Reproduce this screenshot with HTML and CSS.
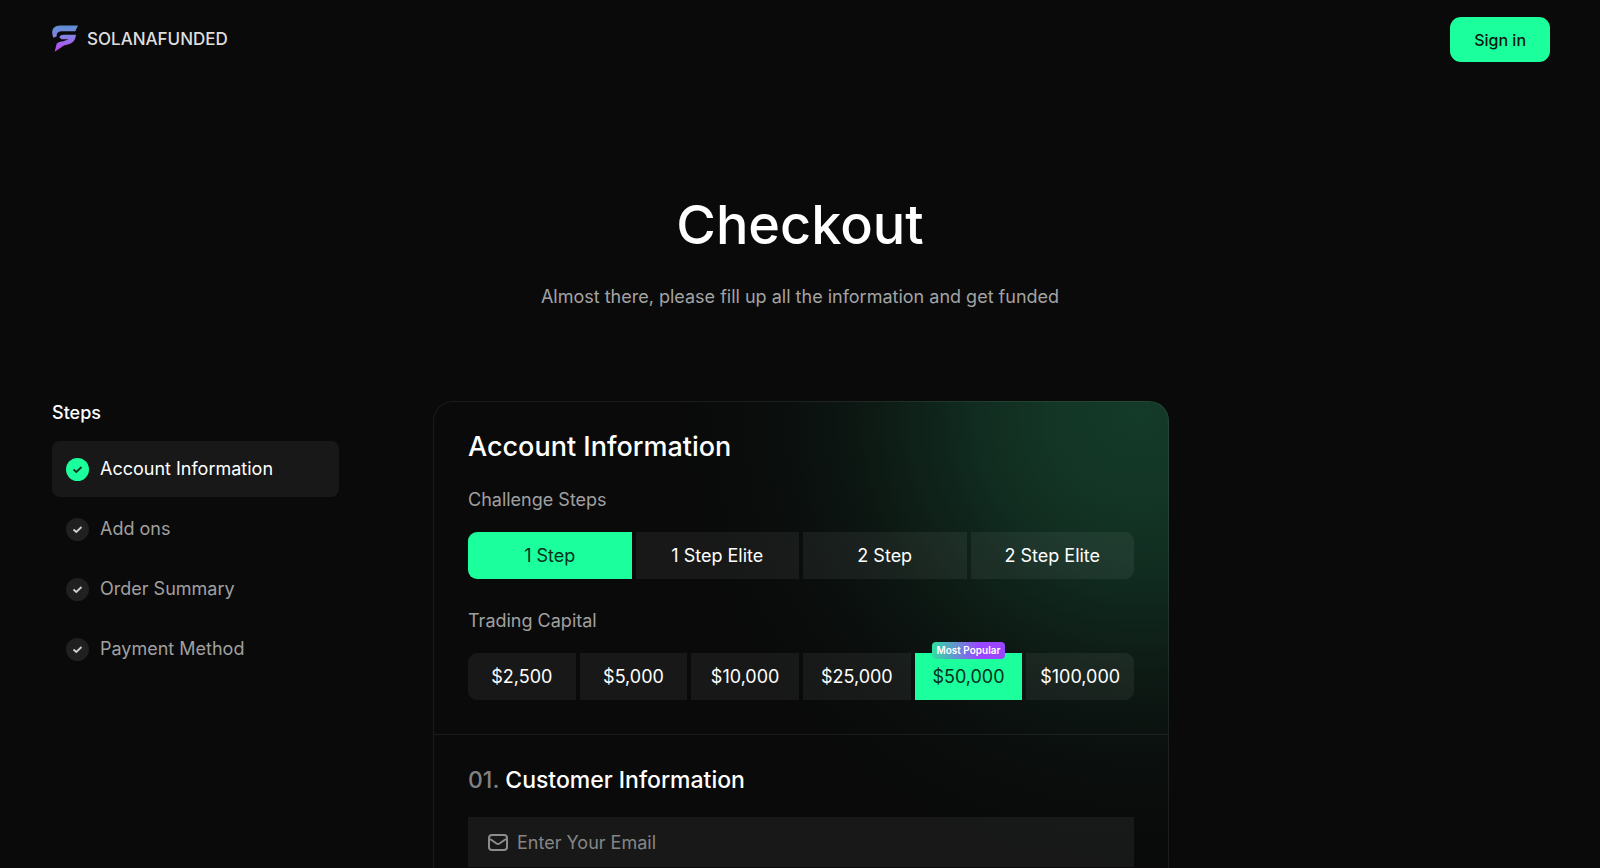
FILE: index.html
```html
<!DOCTYPE html>
<html lang="en">
<head>
    <meta charset="UTF-8">
    <meta name="viewport" content="width=device-width, initial-scale=1.0">
    <title>Checkout - SolanaFunded</title>
    <link rel="stylesheet" href="styles.css">
</head>
<body>
    <header class="header">
        <a href="#" class="logo">
            <svg class="logo-icon" viewBox="0 0 78 80" aria-hidden="true">
                <defs>
                    <linearGradient id="logoGradient" x1="0" y1="0" x2="0" y2="80" gradientUnits="userSpaceOnUse">
                        <stop offset="0" stop-color="#5b8fd0"/>
                        <stop offset="0.4" stop-color="#8484e0"/>
                        <stop offset="0.75" stop-color="#a75cf0"/>
                        <stop offset="1" stop-color="#c640f5"/>
                    </linearGradient>
                </defs>
                <path fill="url(#logoGradient)" d="M4 38C-4 18 2 1 24 1H78L70 18H30C18 18 13 24 14 34Z"/>
                <path fill="url(#logoGradient)" d="M22 36C25 31 28 29 34 29H72C70 46 62 54 50 57L36 61L8 80L14 56C18 50 26 49 34 48L50 42H28Z"/>
            </svg>
            <span class="logo-text">SOLANAFUNDED</span>
        </a>
        <button type="button" class="sign-in">Sign in</button>
    </header>

    <section class="hero">
        <h1>Checkout</h1>
        <p>Almost there, please fill up all the information and get funded</p>
    </section>

    <main class="checkout">
        <!-- Steps -->
        <aside class="steps">
            <h2>Steps</h2>
            <nav class="steps-list">
                <a href="#account" class="step active">
                    <svg class="step-check" viewBox="0 0 23 23" aria-hidden="true"><circle cx="11.500" cy="11.500" r="11.500"/><path d="M7.500 11.500L10.300 14L15.500 9"/></svg>
                    Account Information
                </a>
                <a href="#addons" class="step">
                    <svg class="step-check" viewBox="0 0 23 23" aria-hidden="true"><circle cx="11.500" cy="11.500" r="11.500"/><path d="M7.500 11.500L10.300 14L15.500 9"/></svg>
                    Add ons
                </a>
                <a href="#summary" class="step">
                    <svg class="step-check" viewBox="0 0 23 23" aria-hidden="true"><circle cx="11.500" cy="11.500" r="11.500"/><path d="M7.500 11.500L10.300 14L15.500 9"/></svg>
                    Order Summary
                </a>
                <a href="#payment" class="step">
                    <svg class="step-check" viewBox="0 0 23 23" aria-hidden="true"><circle cx="11.500" cy="11.500" r="11.500"/><path d="M7.500 11.500L10.300 14L15.500 9"/></svg>
                    Payment Method
                </a>
            </nav>
        </aside>

        <!-- Form -->
        <form class="card">
            <section class="card-section" id="account">
                <h2>Account Information</h2>
                <div class="option-group">
                    <h3 id="challengeLabel">Challenge Steps</h3>
                    <div class="options" role="group" aria-labelledby="challengeLabel">
                        <button type="button" class="option selected">1 Step</button>
                        <button type="button" class="option">1 Step Elite</button>
                        <button type="button" class="option">2 Step</button>
                        <button type="button" class="option">2 Step Elite</button>
                    </div>
                </div>
                <div class="option-group">
                    <h3 id="capitalLabel">Trading Capital</h3>
                    <div class="options" role="group" aria-labelledby="capitalLabel">
                        <button type="button" class="option">$2,500</button>
                        <button type="button" class="option">$5,000</button>
                        <button type="button" class="option">$10,000</button>
                        <button type="button" class="option">$25,000</button>
                        <button type="button" class="option selected"><span class="badge">Most Popular</span>$50,000</button>
                        <button type="button" class="option">$100,000</button>
                    </div>
                </div>
            </section>
            <section class="card-section customer">
                <h2><span>01.</span> Customer Information</h2>
                <label class="field">
                    <svg class="field-icon" viewBox="0 0 20 17" aria-hidden="true"><rect x="1" y="1" width="18" height="15" rx="3"/><path d="M2 5L8.500 9.500Q10 10.400 11.500 9.500L18 5"/></svg>
                    <input type="email" placeholder="Enter Your Email" aria-label="Enter Your Email">
                </label>
            </section>
        </form>
    </main>
</body>
</html>
```

FILE: styles.css
```css
* {
    margin: 0;
    padding: 0;
    box-sizing: border-box;
    font-family: 'Inter', sans-serif;
}

body {
    height: 100vh;
    display: flex;
    flex-direction: column;
    overflow: hidden;
    background: #0a0a0a;
    color: #fff;
    font-size: 18px;
    line-height: 24px;
}

a {
    color: inherit;
    text-decoration: none;
}

button {
    border: none;
    cursor: pointer;
}

/* Header */
.header {
    display: flex;
    justify-content: space-between;
    align-items: center;
    padding: 17px 50px 0 52px;
}

.logo {
    display: flex;
    align-items: center;
    gap: 9px;
    padding-bottom: 2px;
}

.logo-icon {
    width: 26px;
    height: 27px;
}

.logo-text {
    color: #dedede;
    font-size: 17px;
    font-weight: 500;
}

.sign-in {
    padding: 0 24px;
    height: 45px;
    border-radius: 11px;
    background: #1bff9c;
    color: #06180f;
    font-size: 16px;
    font-weight: 500;
}

/* Hero */
.hero {
    padding: 127px 24px 0;
    text-align: center;
}

.hero h1 {
    font-size: 54px;
    font-weight: 500;
    line-height: 72px;
}

.hero p {
    margin-top: 24px;
    color: #a3a3a3;
}

/* Checkout */
.checkout {
    flex: none;
    display: grid;
    grid-template-columns: 287px 1fr 287px;
    gap: 94px;
    margin-top: 92px;
    padding: 0 50px 0 52px;
}

.steps h2 {
    font-size: 18px;
    font-weight: 500;
}

.steps-list {
    display: flex;
    flex-direction: column;
    gap: 4px;
    margin-top: 16px;
}

.step {
    display: flex;
    align-items: center;
    gap: 11px;
    height: 56px;
    padding: 0 14px;
    border-radius: 8px;
    color: #a0a0a0;
}

.step.active {
    background: #181818;
    color: #fff;
}

.step-check {
    width: 23px;
    height: 23px;
    fill: none;
    stroke: #d0d0d0;
    stroke-width: 1.8;
}

.step-check circle {
    fill: #202020;
    stroke: none;
}

.step.active .step-check {
    stroke: #0a3320;
}

.step.active .step-check circle {
    fill: #1bff9c;
}

.card {
    border: 1px solid rgba(255, 255, 255, 0.07);
    border-bottom: none;
    border-radius: 20px 20px 0 0;
    background: radial-gradient(circle 470px at calc(100% - 30px) 10px,
        rgba(60, 250, 165, 0.2) 0%,
        rgba(60, 250, 165, 0.18) 20%,
        rgba(60, 250, 165, 0.14) 35%,
        rgba(60, 250, 165, 0.09) 50%,
        rgba(60, 250, 165, 0.05) 62%,
        rgba(60, 250, 165, 0.02) 78%,
        rgba(60, 250, 165, 0) 100%) border-box no-repeat;
}

.card-section {
    padding: 28px 34px 34px;
}

.card-section h2 {
    font-size: 27px;
    font-weight: 500;
    line-height: 34px;
}

.option-group {
    margin-top: 24px;
}

.option-group + .option-group {
    margin-top: 30px;
}

.option-group h3 {
    margin-bottom: 20px;
    color: #a0a0a0;
    font-size: 18px;
    font-weight: 400;
}

.options {
    display: grid;
    grid-auto-flow: column;
    grid-auto-columns: 1fr;
    gap: 4px;
}

.option {
    position: relative;
    height: 47px;
    background: rgba(255, 255, 255, 0.06);
    color: #fff;
    font-size: 18px;
}

.option:first-child {
    border-radius: 9px 0 0 9px;
}

.option:last-child {
    border-radius: 0 9px 9px 0;
}

.option.selected {
    background: #1bff9c;
    color: #06301c;
}

.badge {
    position: absolute;
    top: -11px;
    left: 50%;
    transform: translateX(-50%);
    padding: 0 4px;
    border-radius: 4px;
    background: linear-gradient(90deg, #2fe0a0, #9a45ff 65%);
    color: #fff;
    font-size: 10px;
    font-weight: 600;
    line-height: 17px;
    white-space: nowrap;
}

.customer {
    border-top: 1px solid rgba(255, 255, 255, 0.07);
}

.customer h2 {
    font-size: 23px;
}

.customer h2 span {
    color: #808080;
}

.field {
    display: flex;
    align-items: center;
    gap: 9px;
    height: 50px;
    margin-top: 20px;
    padding: 0 20px;
    background: rgba(255, 255, 255, 0.06);
}

.field-icon {
    width: 20px;
    height: 17px;
    fill: none;
    stroke: #8c8c8c;
    stroke-width: 2;
}

.field input {
    flex: 1;
    border: none;
    outline: none;
    background: transparent;
    color: #fff;
    font-size: 18px;
}

.field input::placeholder {
    color: #858585;
}
```
